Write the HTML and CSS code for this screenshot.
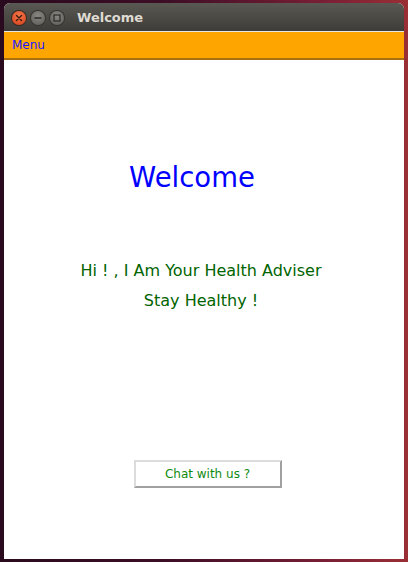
FILE: index.html
```html
<!DOCTYPE html>
<html>
<head>
<meta charset="utf-8">
<link rel="stylesheet" href="styles.css">
</head>
<body>
<div class="window">
  <div class="titlebar">
    <div class="controls">
      <span class="btn close"><svg width="14" height="14" viewBox="0 0 14 14"><path d="M4.5 4.5 L9.5 9.5 M9.5 4.5 L4.5 9.5" stroke="#3a1a10" stroke-width="1.4" stroke-linecap="round"/></svg></span>
      <span class="btn grey"><svg width="14" height="14" viewBox="0 0 14 14"><path d="M3.5 7 H10.5" stroke="#2c2b28" stroke-width="1.4"/></svg></span>
      <span class="btn grey"><svg width="14" height="14" viewBox="0 0 14 14"><rect x="4" y="4" width="6" height="6" fill="none" stroke="#2c2b28" stroke-width="1.2"/></svg></span>
    </div>
    <div class="title">Welcome</div>
  </div>
  <div class="menubar"><span class="menu">Menu</span></div>
  <div class="content">
    <h1 class="heading">Welcome</h1>
    <p class="line first">Hi ! , I Am Your Health Adviser</p>
    <p class="line">Stay Healthy !</p>
    <button class="chat">Chat with us ?</button>
  </div>
</div>
</body>
</html>
```
FILE: styles.css
```css
html, body {
  margin: 0;
  padding: 0;
  width: 408px;
  height: 562px;
  overflow: hidden;
}
body {
  background: linear-gradient(90deg, #2a0a1e 0%, #3c0e26 40%, #7a1f35 80%, #9a2f35 100%);
  font-family: "DejaVu Sans", sans-serif;
}
.window {
  margin: 3px 0 0 4px;
  width: 400px;
  height: 556px;
  display: flex;
  flex-direction: column;
  background: #ffffff;
  border-radius: 6px 6px 0 0;
  overflow: hidden;
}
.titlebar {
  height: 28px;
  background: linear-gradient(180deg, #5a5852 0%, #4a4944 55%, #3d3c38 100%);
  border-bottom: 1px solid #e8e6e0;
  display: flex;
  align-items: center;
  flex-shrink: 0;
}
.controls {
  display: flex;
  gap: 5px;
  margin-left: 8px;
  margin-top: 1px;
}
.btn {
  width: 14px;
  height: 14px;
  border-radius: 50%;
  display: block;
}
.btn svg { display: block; }
.close {
  background: radial-gradient(circle at 50% 35%, #f47a4e 0%, #e2532a 60%, #c8401c 100%);
  box-shadow: 0 0 0 1px #3a2a22;
}
.grey {
  background: radial-gradient(circle at 50% 35%, #8a8882 0%, #6e6c66 60%, #5c5a55 100%);
  box-shadow: 0 0 0 1px #34332f;
}
.title {
  margin-left: 13px;
  color: #dfdbd2;
  font-weight: bold;
  font-size: 13px;
  margin-top: 1px;
}
.menubar {
  height: 26px;
  background: #ffa500;
  border-bottom: 2px solid #a8700e;
  display: flex;
  align-items: center;
  flex-shrink: 0;
}
.menu {
  color: #1a1aff;
  font-size: 12px;
  margin-left: 8px;
  margin-top: -1px;
}
.content {
  flex: 1;
  display: flex;
  flex-direction: column;
  align-items: center;
}
.heading {
  margin: 100px 0 0 -24px;
  font-weight: normal;
  font-size: 27.5px;
  color: #0000ff;
  line-height: 34px;
}
.line {
  margin: 0;
  font-size: 16px;
  color: #006400;
  line-height: 30px;
  margin-left: -6px;
}
.line.first {
  margin-top: 62px;
}
.chat {
  margin-top: 144px;
  margin-left: 7px;
  width: 148px;
  height: 28px;
  background: #ffffff;
  border: 2px solid;
  border-color: #dcdcdc #a0a0a0 #a0a0a0 #dcdcdc;
  color: #108a10;
  font-family: "DejaVu Sans", sans-serif;
  font-size: 12px;
  padding: 0;
}
```
